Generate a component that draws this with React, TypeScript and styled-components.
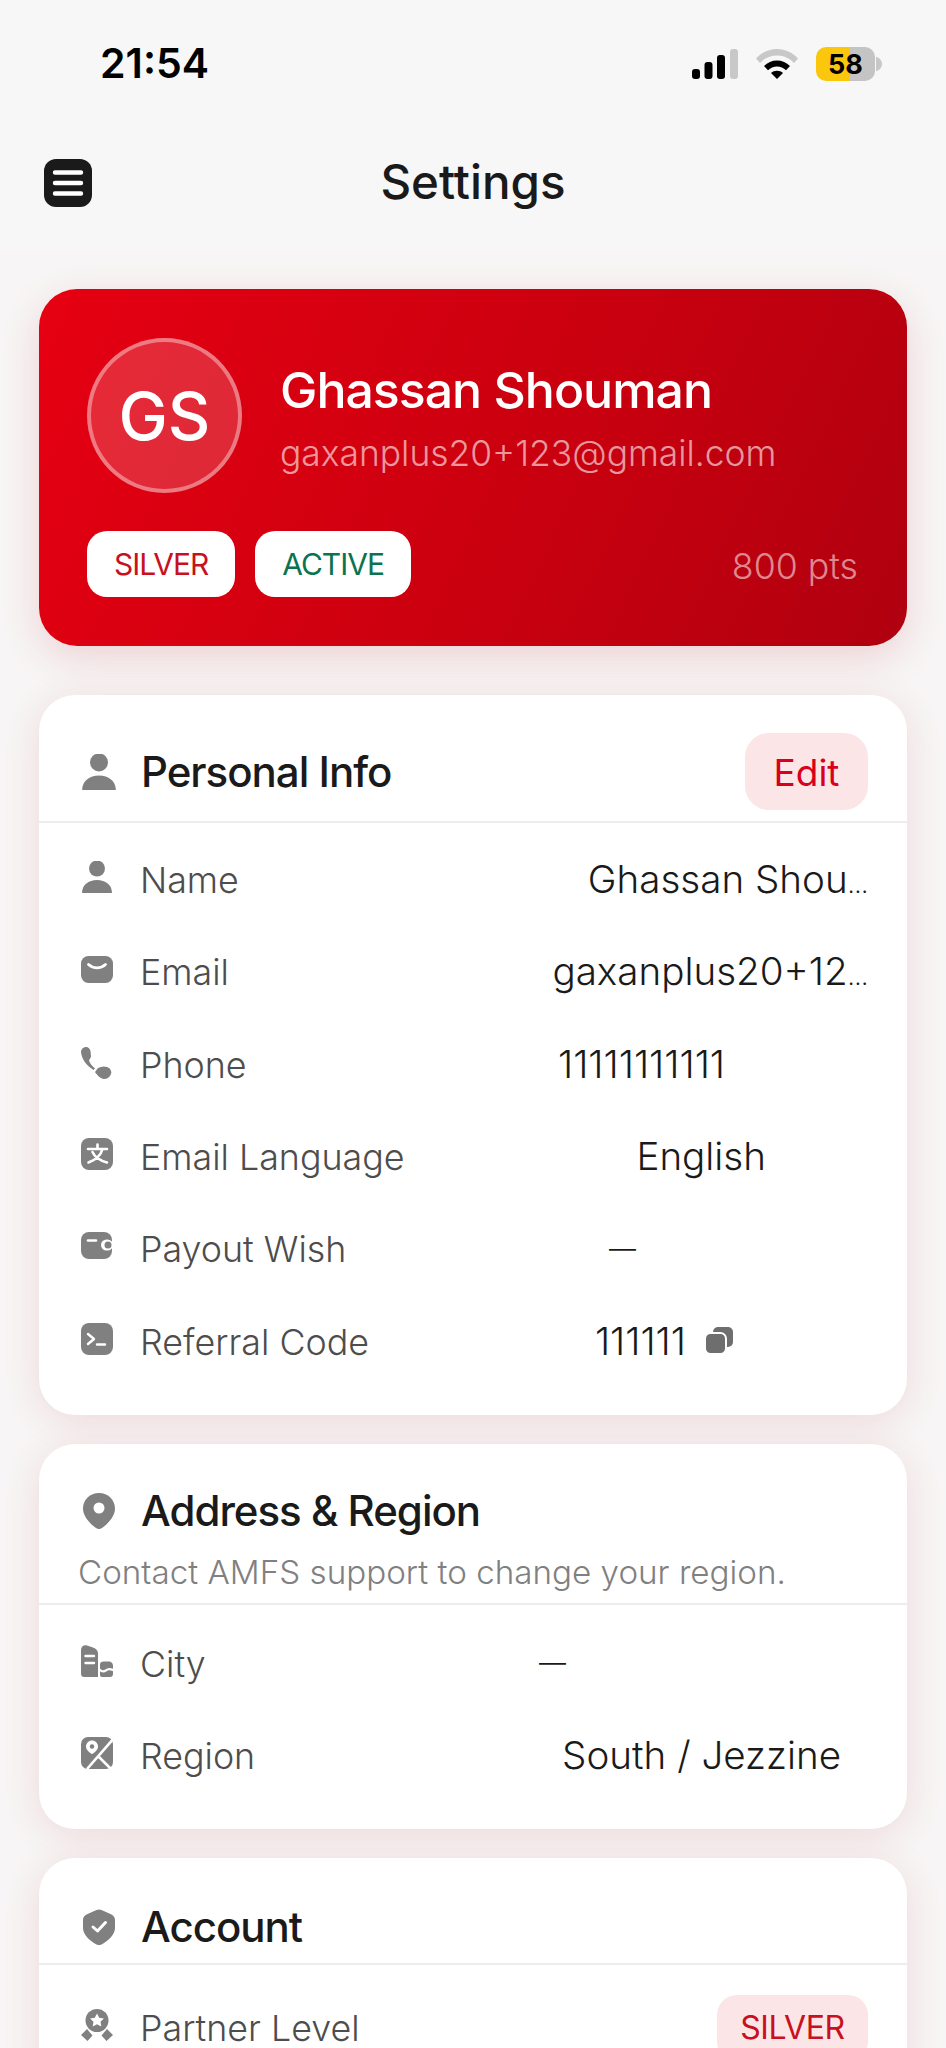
import styled, { createGlobalStyle } from "styled-components";

const GlobalStyle = createGlobalStyle`
  html, body {
    margin: 0;
    padding: 0;
    background: #f7f7f7;
  }
  * {
    box-sizing: border-box;
  }
`;

function MenuIcon() {
  return (
    <MenuSvg viewBox="0 0 48 48">
      <rect width="48" height="48" rx="12" fill="#1a1a1a" />
      <path d="M11 13.500h26M11 24h26M11 34.500h26" stroke="#fff" strokeWidth="4.400" strokeLinecap="round" />
    </MenuSvg>
  );
}

function SignalIcon() {
  return (
    <svg width="46" height="30" viewBox="0 0 46 30">
      <rect x="0" y="20" width="8" height="10" rx="3" fill="#000" />
      <rect x="12.500" y="13" width="8" height="17" rx="3" fill="#000" />
      <rect x="25" y="6" width="8" height="24" rx="3" fill="#000" />
      <rect x="38" y="0" width="8" height="30" rx="3" fill="#c8c8c8" />
    </svg>
  );
}

function WifiIcon() {
  return (
    <svg width="42" height="30" viewBox="0 0 42 30">
      <path d="M0 9.500C5.500 3.500 13 0 21 0s15.500 3.500 21 9.500l-4 4.500C33.500 9 27.500 6.500 21 6.500S8.500 9 4 14z" fill="#c8c8c8" />
      <path d="M8 17c3.500-3.500 8-5.500 13-5.500s9.500 2 13 5.500l-4 4.200c-2.500-2.300-5.500-3.700-9-3.700s-6.500 1.400-9 3.700z" fill="#000" />
      <path d="M15 24c1.600-1.500 3.700-2.300 6-2.300s4.400.8 6 2.300l-6 6z" fill="#000" />
    </svg>
  );
}

function BatteryNub() {
  return (
    <svg width="6" height="14" viewBox="0 0 6 14">
      <path d="M0 0c3.500.6 6 3.500 6 7s-2.500 6.400-6 7z" fill="#c8c8c8" />
    </svg>
  );
}

function PersonIcon({ size = 32 }: { size?: number }) {
  return (
    <IconSvg viewBox="0 0 32 32" fill="#808080" $size={size}>
      <circle cx="16" cy="7.500" r="8" />
      <path d="M1 32c0-8 6.500-13 15-13s15 5 15 13z" />
    </IconSvg>
  );
}

function MailIcon() {
  return (
    <IconSvg viewBox="0 0 32 32" $size={32}>
      <rect y="3" width="32" height="27" rx="7.500" fill="#808080" />
      <path d="M7.500 11.500c5 4.500 12 4.500 17 0" fill="none" stroke="#fff" strokeWidth="2.800" strokeLinecap="round" />
    </IconSvg>
  );
}

function PhoneIcon() {
  return (
    <IconSvg viewBox="0 0 32 36" $size={32} $tall>
      <path
        fill="#808080"
        d="M3 3.500C6 2 9 4 9.500 7l.5 5c0 2-1.500 3-2 4.500 1 3 3 5.500 6 8L12.500 26C6 22 .5 15 0 8c0-2 1-3.500 3-4.500z"
      />
      <path
        fill="#808080"
        d="M17 24c3-1.500 6-2 9-1s5 4 4 7-4 5-7 5c-3.500 0-7-4-9-7z"
      />
    </IconSvg>
  );
}

function LanguageIcon() {
  return (
    <IconSvg viewBox="0 0 32 32" $size={32}>
      <rect width="32" height="32" rx="8" fill="#808080" />
      <path
        d="M16.500 6.500v3.500M7 11h19M21.500 11c-1.500 6-6 10.500-14 13.500M11.500 14c2 4.500 7 8.500 14.500 10.500"
        fill="none"
        stroke="#fff"
        strokeWidth="2.600"
        strokeLinecap="round"
      />
    </IconSvg>
  );
}

function WalletIcon() {
  return (
    <IconSvg viewBox="0 0 32 32" $size={32}>
      <rect x="0" y="2" width="31" height="27" rx="8" fill="#808080" />
      <path d="M7 10.500h8" stroke="#fff" strokeWidth="2.600" strokeLinecap="round" />
      <rect x="20" y="9.500" width="12" height="11" rx="5.500" fill="#fff" />
      <circle cx="27" cy="15" r="3.500" fill="#808080" />
    </IconSvg>
  );
}

function TerminalIcon() {
  return (
    <IconSvg viewBox="0 0 32 32" $size={32}>
      <rect width="32" height="32" rx="8" fill="#808080" />
      <path d="M7 11l6 5-6 5M16 21.500h8" fill="none" stroke="#fff" strokeWidth="2.400" strokeLinecap="round" strokeLinejoin="round" />
    </IconSvg>
  );
}

function PinIcon() {
  return (
    <IconSvg viewBox="0 0 32 36" $size={32} $tall>
      <path fill="#808080" d="M16 0c9 0 16 6.800 16 15.500C32 24 24 31.500 19 35c-1.800 1.300-4.200 1.300-6 0C8 31.500 0 24 0 15.500 0 6.800 7 0 16 0z" />
      <circle cx="16" cy="15" r="5.500" fill="#fff" />
    </IconSvg>
  );
}

function CityIcon() {
  return (
    <IconSvg viewBox="0 0 32 32" $size={32}>
      <path fill="#808080" d="M0 5c0-3.500 3-5.500 6-4.500l6 2c3 1 5 3 5 6V32H3c-1.700 0-3-1.300-3-3z" />
      <path d="M4.500 11h8.500M4.500 18h8.500" stroke="#fff" strokeWidth="2.400" strokeLinecap="round" />
      <path fill="#808080" d="M19 19.500c0-2 1.500-3 3.500-3H28c2.200 0 4 1.800 4 4V29c0 1.700-1.300 3-3 3H21c-1.200 0-2-.8-2-2z" />
      <path d="M18.500 24.500c2.500 2.500 4.500 2.500 6.500.8s4-1.800 7-.3" fill="none" stroke="#fff" strokeWidth="2.200" strokeLinecap="round" />
    </IconSvg>
  );
}

function RegionIcon() {
  return (
    <IconSvg viewBox="0 0 32 32" $size={32}>
      <rect width="32" height="32" rx="7" fill="#808080" />
      <path d="M33 1L6 32M18 20l12 12" stroke="#fff" strokeWidth="2.600" />
      <path fill="#fff" d="M11 3.500c-3.300 0-6 2.700-6 6 0 3.300 3.500 6.500 6 7.500 2.500-1 6-4.200 6-7.500 0-3.300-2.700-6-6-6z" />
      <circle cx="11" cy="9.500" r="2.200" fill="#808080" />
    </IconSvg>
  );
}

function ShieldIcon() {
  return (
    <IconSvg viewBox="0 0 32 36" $size={32} $tall>
      <path fill="#808080" d="M13.500 1c1.600-.8 3.400-.8 5 0l9.500 4.200c2.400 1 4 3 4 5.500V19c0 6.500-6.500 12.500-13 16.300-1.900 1-4.100 1-6 0C6.500 31.500 0 25.500 0 19v-8.300C0 8.200 1.600 6.200 4 5.200z" />
      <path d="M10 18l4.500 4L22.500 13.500" fill="none" stroke="#fff" strokeWidth="3" strokeLinecap="round" strokeLinejoin="round" />
    </IconSvg>
  );
}

function AwardIcon() {
  return (
    <IconSvg viewBox="0 0 32 32" $size={32}>
      <circle cx="16" cy="11.500" r="11.500" fill="#808080" />
      <path fill="#fff" d="M16 4.500l2.200 4.300 4.700.7-3.400 3.300.8 4.700-4.300-2.200-4.300 2.200.8-4.700-3.400-3.300 4.700-.7z" />
      <path fill="#808080" d="M0 26l6-6 5.500 6.500-5 5.500zM32 26l-6-6-5.500 6.500 5 5.500z" />
    </IconSvg>
  );
}

function CopyIcon() {
  return (
    <CopySvg viewBox="0 0 28 28">
      <rect x="8" y="0" width="20" height="20" rx="5" fill="#6e6e6e" />
      <rect x="0" y="6" width="21" height="21" rx="5.500" fill="#6e6e6e" stroke="#fff" strokeWidth="2" />
    </CopySvg>
  );
}

function App() {
  return (
    <>
      <GlobalStyle />
      <Page>
        <TopArea>
          <StatusBar>
            <Time>21:54</Time>
            <StatusIcons>
              <SignalIcon />
              <WifiIcon />
              <Battery>
                <BatteryBody>58</BatteryBody>
                <BatteryNub />
              </Battery>
            </StatusIcons>
          </StatusBar>
          <NavBar>
            <MenuIcon />
            <NavTitle>Settings</NavTitle>
          </NavBar>
        </TopArea>

        <Content>
          <HeroCard>
            <HeroTop>
              <Avatar>GS</Avatar>
              <HeroText>
                <HeroName>Ghassan Shouman</HeroName>
                <HeroEmail>gaxanplus20+123@gmail.com</HeroEmail>
              </HeroText>
            </HeroTop>
            <HeroBottom>
              <HeroBadges>
                <HeroBadge $color="#c8101e">SILVER</HeroBadge>
                <HeroBadge $color="#0a7350">ACTIVE</HeroBadge>
              </HeroBadges>
              <Points>800 pts</Points>
            </HeroBottom>
          </HeroCard>

          <Card>
            <CardHeader $height={128}>
              <HeaderRow>
                <HeaderLabel>
                  <HeaderIcon>
                    <PersonIcon size={36} />
                  </HeaderIcon>
                  <CardTitle>Personal Info</CardTitle>
                </HeaderLabel>
                <EditButton>Edit</EditButton>
              </HeaderRow>
            </CardHeader>
            <Rows>
              <Row>
                <RowLabel>
                  <PersonIcon />
                  <LabelText>Name</LabelText>
                </RowLabel>
                <RowValue>
                  <span>
                    Ghassan Shou<Ellipsis>…</Ellipsis>
                  </span>
                </RowValue>
              </Row>
              <Row>
                <RowLabel>
                  <MailIcon />
                  <LabelText>Email</LabelText>
                </RowLabel>
                <RowValue>
                  <span>
                    gaxanplus20+12<Ellipsis>…</Ellipsis>
                  </span>
                </RowValue>
              </Row>
              <Row>
                <RowLabel>
                  <PhoneIcon />
                  <LabelText>Phone</LabelText>
                </RowLabel>
                <RowValue $inset={143}>11111111111</RowValue>
              </Row>
              <Row>
                <RowLabel>
                  <LanguageIcon />
                  <LabelText>Email Language</LabelText>
                </RowLabel>
                <RowValue $inset={102}>English</RowValue>
              </Row>
              <Row>
                <RowLabel>
                  <WalletIcon />
                  <LabelText>Payout Wish</LabelText>
                </RowLabel>
                <DashValue $inset={232}>—</DashValue>
              </Row>
              <Row>
                <RowLabel>
                  <TerminalIcon />
                  <LabelText>Referral Code</LabelText>
                </RowLabel>
                <RowValue $inset={135}>
                  111111
                  <CopyIcon />
                </RowValue>
              </Row>
            </Rows>
          </Card>

          <Card>
            <CardHeader $height={161}>
              <HeaderLabel>
                <HeaderIcon>
                  <PinIcon />
                </HeaderIcon>
                <CardTitle>Address &amp; Region</CardTitle>
              </HeaderLabel>
              <CardNote>Contact AMFS support to change your region.</CardNote>
            </CardHeader>
            <Rows $top={13}>
              <Row>
                <RowLabel>
                  <CityIcon />
                  <LabelText>City</LabelText>
                </RowLabel>
                <DashValue $inset={302}>—</DashValue>
              </Row>
              <Row>
                <RowLabel>
                  <RegionIcon />
                  <LabelText>Region</LabelText>
                </RowLabel>
                <RowValue $inset={27}>South / Jezzine</RowValue>
              </Row>
            </Rows>
          </Card>

          <Card>
            <CardHeader $height={107}>
              <HeaderLabel>
                <HeaderIcon>
                  <ShieldIcon />
                </HeaderIcon>
                <CardTitle>Account</CardTitle>
              </HeaderLabel>
            </CardHeader>
            <Rows $top={16}>
              <Row>
                <RowLabel>
                  <AwardIcon />
                  <LabelText>Partner Level</LabelText>
                </RowLabel>
                <LevelBadge>SILVER</LevelBadge>
              </Row>
            </Rows>
          </Card>
        </Content>
      </Page>
    </>
  );
}

export default App;

const Page = styled.div`
  width: 946px;
  height: 2048px;
  overflow: hidden;
  background: #f7f5f5;
  font-family: "Inter", "Liberation Sans", sans-serif;
  color: #1a1a1a;
`;

const TopArea = styled.header`
  position: relative;
  z-index: 2;
  height: 250px;
  background: #f7f7f7;
`;

const StatusBar = styled.div`
  display: flex;
  align-items: flex-start;
  justify-content: space-between;
  height: 108px;
  padding: 42px 64px 0 100px;
`;

const Time = styled.div`
  font-size: 41px;
  line-height: 42px;
  font-weight: 600;
  color: #000;
`;

const StatusIcons = styled.div`
  display: flex;
  align-items: center;
  gap: 18px;
  height: 36px;
  margin-top: 4px;
`;

const Battery = styled.div`
  display: flex;
  align-items: center;
  gap: 1px;
`;

const BatteryBody = styled.div`
  display: flex;
  align-items: center;
  justify-content: center;
  width: 59px;
  height: 34px;
  border-radius: 10px;
  background: linear-gradient(90deg, #fbc70d 57%, #c4c4c4 57%);
  font-size: 27px;
  font-weight: 700;
  color: #000;
`;

const NavBar = styled.nav`
  display: grid;
  grid-template-columns: 48px 1fr 48px;
  align-items: center;
  height: 142px;
  padding: 8px 44px 0;
`;

const MenuSvg = styled.svg`
  display: block;
  width: 48px;
  height: 48px;
`;

const NavTitle = styled.h1`
  margin: 0 0 3px;
  text-align: center;
  font-size: 47.5px;
  font-weight: 500;
  color: #1a1a1a;
`;

const Content = styled.main`
  display: flex;
  flex-direction: column;
  gap: 29px;
  padding: 39px 39px 0;
`;

const HeroCard = styled.section`
  display: flex;
  flex-direction: column;
  gap: 38px;
  height: 357px;
  margin-bottom: 20px;
  padding: 49px 49px 48px 48px;
  border-radius: 38px;
  background: linear-gradient(115deg, #e60012 0%, #c8000f 60%, #b0000f 100%);
  box-shadow: 0 12px 40px rgba(190, 0, 20, 0.14);
`;

const HeroTop = styled.div`
  display: flex;
  align-items: center;
  gap: 38px;
`;

const Avatar = styled.div`
  display: flex;
  align-items: center;
  justify-content: center;
  flex: none;
  width: 155px;
  height: 155px;
  border: 4px solid rgba(255, 255, 255, 0.38);
  border-radius: 50%;
  background: rgba(255, 255, 255, 0.16);
  font-size: 66px;
  font-weight: 500;
  color: #fff;
`;

const HeroText = styled.div`
  display: flex;
  flex-direction: column;
  gap: 13px;
  margin-top: 5px;
`;

const HeroName = styled.div`
  font-size: 50px;
  line-height: 58px;
  font-weight: 500;
  letter-spacing: -1px;
  color: #fff;
`;

const HeroEmail = styled.div`
  font-size: 35.4px;
  line-height: 44px;
  font-weight: 300;
  color: rgba(255, 255, 255, 0.6);
`;

const HeroBottom = styled.div`
  display: flex;
  align-items: center;
  justify-content: space-between;
`;

const HeroBadges = styled.div`
  display: flex;
  gap: 20px;
`;

const HeroBadge = styled.span<{ $color: string }>`
  display: flex;
  align-items: center;
  justify-content: center;
  height: 66px;
  padding: 0 27px;
  border-radius: 20px;
  background: #fff;
  font-size: 30px;
  font-weight: 400;
  letter-spacing: -1px;
  color: ${(p) => p.$color};
`;

const Points = styled.span`
  margin-top: 3px;
  font-size: 35.7px;
  font-weight: 300;
  color: rgba(255, 255, 255, 0.55);
`;

const Card = styled.section`
  border-radius: 36px;
  background: #fff;
  box-shadow: 0 6px 36px rgba(190, 60, 70, 0.14);
`;

const CardHeader = styled.div<{ $height: number }>`
  display: flex;
  flex-direction: column;
  justify-content: flex-end;
  height: ${(p) => p.$height}px;
  padding: 0 39px 10px;
  border-bottom: 2px solid #ececec;
`;

const HeaderRow = styled.div`
  display: flex;
  align-items: center;
  justify-content: space-between;
`;

const HeaderLabel = styled.div`
  display: flex;
  align-items: center;
  gap: 24px;
  padding-left: 3px;
`;

const HeaderIcon = styled.div`
  display: flex;
  justify-content: center;
  width: 36px;

  svg {
    margin-bottom: 0;
  }
`;

const CardTitle = styled.h2`
  margin: 0;
  font-size: 42px;
  line-height: 52px;
  font-weight: 500;
  letter-spacing: -1px;
  color: #1a1a1a;
`;

const CardNote = styled.p`
  margin: 15px 0 1px;
  font-size: 33.2px;
  line-height: 40px;
  font-weight: 300;
  color: #808080;
`;

const EditButton = styled.button`
  width: 123px;
  height: 77px;
  margin-bottom: 1px;
  padding: 2px 0 0;
  border: none;
  border-radius: 24px;
  background: #fbe5e7;
  font-family: inherit;
  font-size: 37px;
  font-weight: 400;
  color: #d8001a;
`;

const Rows = styled.div<{ $top?: number }>`
  padding: ${(p) => p.$top ?? 11}px 39px 27px 42px;
`;

const Row = styled.div`
  display: flex;
  align-items: center;
  justify-content: space-between;
  height: 92.3px;
`;

const RowLabel = styled.div`
  display: flex;
  align-items: center;
  gap: 27px;
`;

const LabelText = styled.span`
  font-size: 35.8px;
  line-height: 36px;
  font-weight: 300;
  color: #4d4d4d;
`;

const RowValue = styled.span<{ $inset?: number }>`
  display: flex;
  align-items: center;
  gap: 19px;
  margin-right: ${(p) => p.$inset ?? 0}px;
  margin-bottom: 2px;
  font-size: 38.6px;
  font-weight: 300;
  color: #1a1a1a;
`;

const DashValue = styled(RowValue)`
  font-size: 27px;
`;

const Ellipsis = styled.span`
  font-size: 24px;
`;

const LevelBadge = styled.span`
  display: flex;
  align-items: center;
  justify-content: center;
  width: 151px;
  height: 66px;
  border-radius: 20px;
  background: #fbe5e7;
  font-size: 32px;
  font-weight: 400;
  letter-spacing: -0.4px;
  color: #c8101e;
`;

const IconSvg = styled.svg<{ $size: number; $tall?: boolean }>`
  display: block;
  flex: none;
  width: ${(p) => p.$size}px;
  height: ${(p) => (p.$tall ? p.$size * 1.125 : p.$size)}px;
  margin-bottom: 6px;
`;

const CopySvg = styled.svg`
  display: block;
  width: 28px;
  height: 28px;
`;
